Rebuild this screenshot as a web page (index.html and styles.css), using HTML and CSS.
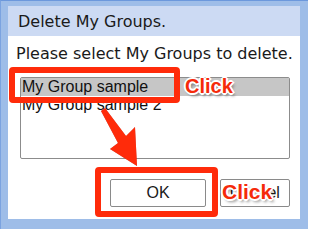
FILE: index.html
```html
<!DOCTYPE html>
<html>
<head>
<meta charset="utf-8">
<link rel="stylesheet" href="styles.css">
</head>
<body>
<div class="page">
  <div class="frame">
    <div class="dialog">
      <div class="title">Delete My Groups.</div>
      <div class="content">
        <p class="prompt">Please select My Groups to delete.</p>
        <div class="listbox">
          <div class="item selected">My Group sample</div>
          <div class="item">My Group sample 2</div>
        </div>
        <div class="buttons">
          <button class="btn ok">OK</button>
          <button class="btn cancel">Cancel</button>
        </div>
      </div>
    </div>
  </div>
  <div class="redbox box-item"></div>
  <div class="redbox box-ok"></div>
  <div class="click click-item">Click</div>
  <div class="click click-cancel">Click</div>
  <svg class="arrow" width="308" height="229" viewBox="0 0 308 229">
    <polygon points="101,111 105,108 126,136 135,127 137,166 110,149 118,143" fill="#ff2b0a"/>
  </svg>
</div>
</body>
</html>
```
FILE: styles.css
```css
html, body {
  margin: 0;
  padding: 0;
}
body {
  width: 308px;
  height: 229px;
  overflow: hidden;
}
.page {
  position: relative;
  width: 308px;
  height: 229px;
}
.frame {
  box-sizing: border-box;
  height: 229px;
  background: #9ebde8;
  border-top: 1px solid #6c98dc;
  border-left: 1px solid #7ba3e0;
  padding: 5px 8px 10px 7px;
}
.dialog {
  background: #fff;
  height: 213px;
}
.title {
  box-sizing: border-box;
  height: 30px;
  background: #ccdaf3;
  padding: 1px 0 0 10px;
  font: 16px/29px "DejaVu Sans", sans-serif;
  color: #1a1a1a;
}
.content {
  padding: 8px 0 0 8px;
}
.prompt {
  margin: 0;
  font: 16px/20px "DejaVu Sans", sans-serif;
  color: #1a1a1a;
}
.listbox {
  box-sizing: border-box;
  height: 82px;
  margin: 13px 10px 0 4px;
  border: 1px solid #8c8c8c;
  border-radius: 2px;
  font: 16px/18px "Liberation Sans", Arial, sans-serif;
  color: #111;
}
.item {
  padding-left: 1px;
  height: 18px;
}
.selected {
  background: #c6c6c6;
}
.buttons {
  display: flex;
  justify-content: flex-end;
  gap: 14px;
  margin: 20px 10px 0 0;
}
.btn {
  box-sizing: border-box;
  height: 28px;
  border: 1px solid #8a8a8a;
  border-radius: 2px;
  background: #fff;
  padding: 0;
  font: 16px "Liberation Sans", Arial, sans-serif;
  color: #1a1a1a;
}
.ok {
  width: 96px;
}
.cancel {
  width: 70px;
}
.redbox {
  position: absolute;
  box-sizing: border-box;
  border: 6px solid #ff2b0a;
  border-radius: 4px;
}
.box-item {
  left: 9px;
  top: 67px;
  width: 171px;
  height: 36px;
}
.box-ok {
  left: 95px;
  top: 167px;
  width: 123px;
  height: 50px;
}
.click {
  position: absolute;
  font: bold 20px/20px "Liberation Sans", Arial, sans-serif;
  color: #f52a0a;
  text-shadow: 1px 1px 0 #fff, -1px -1px 0 #fff, 1px -1px 0 #fff, -1px 1px 0 #fff,
    2px 0 0 #fff, -2px 0 0 #fff, 0 2px 0 #fff, 0 -2px 0 #fff,
    2px 3px 3px rgba(0, 0, 0, 0.45);
}
.click-item {
  left: 185px;
  top: 76px;
}
.click-cancel {
  left: 222px;
  top: 182px;
  font-size: 21px;
}
.arrow {
  position: absolute;
  left: 0;
  top: 0;
  filter: drop-shadow(0 0 0.5px rgba(120, 0, 0, 0.5));
}
```
